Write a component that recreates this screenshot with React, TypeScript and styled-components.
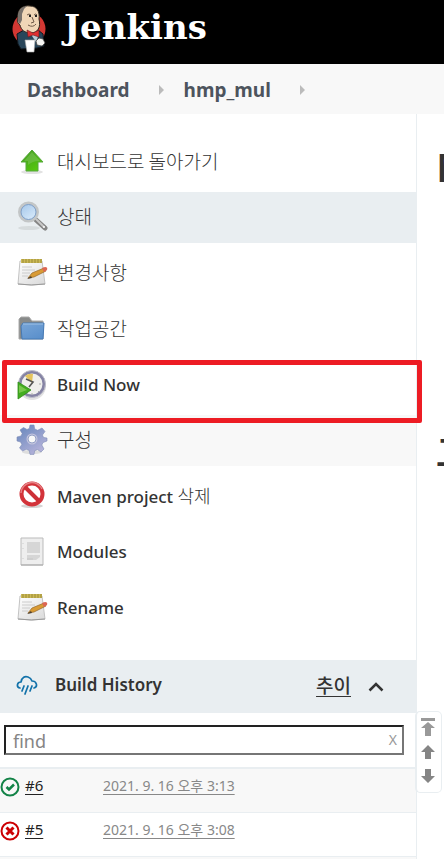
import React from 'react';
import styled, { createGlobalStyle } from 'styled-components';

const latin = `'Noto Sans', 'Noto Sans CJK KR', sans-serif`;
const korean = `'Noto Sans CJK KR', 'Noto Sans', sans-serif`;

const GlobalStyle = createGlobalStyle`
  *, *::before, *::after { box-sizing: border-box; }
  html, body, #root { height: 100%; }
  body {
    margin: 0;
    overflow: hidden;
    background: #fff;
    color: #333;
    font-family: ${latin};
  }
`;

const Page = styled.div`
  display: flex;
  flex-direction: column;
  height: 100%;
  overflow: hidden;
`;

const Header = styled.header`
  flex: none;
  height: 64px;
  padding: 4px 12px;
  background: #000;
`;

const Brand = styled.a`
  display: flex;
  align-items: flex-start;
  gap: 18px;
  color: #fff;
  text-decoration: none;
`;

const BrandName = styled.span`
  font: bold 34px/46px 'DejaVu Serif', serif;
`;

const Breadcrumbs = styled.nav`
  flex: none;
  display: flex;
  align-items: center;
  height: 50px;
  padding: 2px 27px 0;
  gap: 20px;
  background: #f8f8f8;
`;

const Crumb = styled.a`
  color: #4d545d;
  font-size: 19px;
  line-height: 26px;
  font-weight: 700;
  text-decoration: none;
`;

const CrumbGroup = styled.div`
  display: flex;
  align-items: center;
  gap: 29px;
`;

const Body = styled.div`
  flex: 1;
  display: flex;
  min-height: 0;
`;

const SidePanel = styled.aside`
  position: relative;
  flex: 1;
  min-width: 0;
  border-right: 1px solid #e9eef1;
`;

const Main = styled.main`
  flex: none;
  width: 27px;
  padding: 26px 0 0 19px;
  overflow: hidden;
  white-space: nowrap;
`;

const Title = styled.h1`
  margin: 0;
  font-size: 40px;
  line-height: 54px;
  font-weight: 600;
`;

const Subtitle = styled.h2`
  margin: 230px 0 0;
  font-family: ${korean};
  font-size: 36px;
  line-height: 54px;
  font-weight: 700;
`;

const TaskList = styled.ul`
  display: flex;
  flex-direction: column;
  justify-content: space-between;
  min-height: 497px;
  margin: 22px 0 27px;
  padding: 0;
  list-style: none;
`;

const Task = styled.li<{ $tone?: string }>`
  height: 51px;
  background: ${(p) => p.$tone ?? 'transparent'};
`;

const TaskLink = styled.a`
  display: flex;
  align-items: center;
  gap: 9px;
  height: 100%;
  padding-left: 16px;
  color: #333;
  font-size: 17px;
  font-weight: 500;
  line-height: 24px;
  text-decoration: none;
`;

const Hangul = styled.span<{ $size?: number }>`
  padding-bottom: 2px;
  font-family: ${korean};
  font-size: ${(p) => p.$size ?? 19}px;
  font-weight: 300;
`;

const Highlight = styled.div`
  position: absolute;
  top: 246px;
  left: 2px;
  right: -6px;
  height: 63px;
  border: 5px solid #ed1c24;
  border-radius: 2px;
  pointer-events: none;
`;

const HistoryHeader = styled.div`
  display: flex;
  align-items: center;
  height: 53px;
  padding: 0 31px 4px 16px;
  background: #e9eef1;
`;

const HistoryTitle = styled.h2`
  flex: 1;
  margin: 0 0 0 17px;
  font-size: 17px;
  line-height: 24px;
  font-weight: 600;
`;

const TrendLink = styled.a`
  color: #333;
  font-family: ${korean};
  font-size: 19px;
  line-height: 26px;
  font-weight: 500;
  text-decoration: underline;
  text-underline-offset: 3px;
`;

const Collapse = styled.button`
  display: flex;
  margin: 4px 0 0 16px;
  padding: 0;
  border: 0;
  background: none;
`;

const Search = styled.div`
  position: relative;
  padding: 12px 12px 12px 4px;
  border-bottom: 2px solid #e9eef1;
`;

const SearchInput = styled.input`
  display: block;
  width: 100%;
  height: 30px;
  padding: 2px 28px 0 7px;
  border: 2px solid #767676;
  border-top-color: #222;
  border-left-color: #222;
  border-radius: 0;
  background: #fff;
  font: 400 18px/24px ${latin};
  outline: none;
  &::placeholder { color: #858585; opacity: 1; }
`;

const Clear = styled.button`
  position: absolute;
  top: 17px;
  right: 19px;
  padding: 0;
  border: 0;
  background: none;
  color: #999;
  font: 400 14px/20px ${latin};
`;

const BuildTable = styled.table`
  width: 100%;
  border-collapse: separate;
  border-spacing: 0;
`;

const BuildRow = styled.tr<{ $shaded?: boolean }>`
  height: 44px;
  background: ${(p) => (p.$shaded ? '#f8f8f8' : '#fff')};
`;

const Cell = styled.td`
  padding: 0;
  border-bottom: 1px solid #e9eef1;
  vertical-align: top;
`;

const BuildId = styled.div`
  display: flex;
  gap: 5px;
  width: 103px;
  padding-top: 6px;
`;

const StatusIcon = styled.svg`
  margin-top: 2px;
`;

const BuildLink = styled.a<{ $muted?: boolean }>`
  color: ${(p) => (p.$muted ? '#888' : '#222')};
  font-size: ${(p) => (p.$muted ? 14 : 15)}px;
  line-height: 20px;
  text-decoration: underline;
  text-underline-offset: 3px;
`;

const BuildTime = styled.div`
  padding-top: 6px;
  line-height: 20px;
`;

const ScrollNav = styled.nav`
  position: absolute;
  top: 597px;
  right: -26px;
  width: 27px;
  display: flex;
  flex-direction: column;
  align-items: center;
  gap: 8px;
  height: 82px;
  padding: 6px 2px 6px 0;
  border: 1px solid #e9eef1;
  border-left-width: 2px;
  border-radius: 5px;
  background: #fff;
`;

const ScrollButton = styled.button`
  display: flex;
  padding: 0;
  border: 0;
  background: none;
`;

const Butler = () => (
  <svg width="34" height="50" viewBox="0 0 34 50" aria-hidden="true">
    <circle cx="17" cy="25" r="16.5" fill="#d33833" />
    <path d="M5 30l7-4h14l5 4 1 12-7 2-16 1-3-5z" fill="#29465a" stroke="#101820" />
    <path d="M6 14C5 5 11 1 18 2c7 0 10 6 9 13 2 8-1 14-8 14-6 0-10-3-11-8-3-2-3-6-2-7z" fill="#f0d6b7" stroke="#302820" />
    <path d="M6 15C5 7 9 3 15 2l-3 3-2 5v6l-2 4c-2-1-2-3-2-5z" fill="#77716c" />
    <path d="M15 11q2-2 4 0M22 11q2-2 3 0M20 13l2 5-3 1M16 21q5 3 8-1" fill="none" stroke="#6d5848" />
    <path d="M17 12h2M23 12h2" stroke="#222" strokeWidth="2" />
    <path d="M18 29l9 1-3 8z" fill="#b9cbd5" />
    <path d="M15 26l6 3 6-3v7l-6-2-5 2z" fill="#df3032" stroke="#651c20" strokeWidth="0.6" />
    <path d="M27 34l4 1 2 4-3 3-5-1-1-4z" fill="#f5f5f2" stroke="#45423f" strokeWidth="0.7" />
    <path d="M13 36h10l-1 12h-7z" fill="#fff" stroke="#a9a9a9" strokeWidth="0.6" />
  </svg>
);

const CrumbArrow = () => (
  <svg width="5" height="10" viewBox="0 0 5 10" aria-hidden="true"><path d="M0 0l5 5-5 5z" fill="#bbb" /></svg>
);

const TaskIcon = ({ children }: { children: React.ReactNode }) => (
  <svg width="32" height="32" viewBox="0 0 32 32" aria-hidden="true">{children}</svg>
);

const Gradient = ({ id, from, to }: { id: string; from: string; to: string }) => (
  <linearGradient id={id} x1="0" y1="0" x2="0.7" y2="1">
    <stop stopColor={from} /><stop offset="1" stopColor={to} />
  </linearGradient>
);

const UpIcon = () => (
  <TaskIcon>
    <Gradient id="green" from="#419722" to="#57c90d" />
    <ellipse cx="16" cy="26" rx="11" ry="2" fill="#e2e2e2" />
    <path d="M16 4L27 16h-5v9H10v-9H5z" fill="url(#green)" stroke="#56a83c" />
    <path d="M16 6L8 15h4v4q5-4 10-4h2z" fill="#8fca72" opacity=".4" />
  </TaskIcon>
);

const SearchIcon = () => (
  <TaskIcon>
    <Gradient id="lens" from="#9fc3e8" to="#d9ebfb" />
    <ellipse cx="13" cy="27" rx="11" ry="2" fill="#d6dbdd" />
    <path d="M19 18l10 9" stroke="#858585" strokeWidth="5" strokeLinecap="round" />
    <path d="M20 18l8 8" stroke="#c9c9c9" strokeWidth="2" />
    <circle cx="12.5" cy="11" r="9" fill="url(#lens)" stroke="#c3c6c7" strokeWidth="3" />
    <circle cx="12.5" cy="11" r="7.5" fill="none" stroke="#7e9fc8" />
    <circle cx="28" cy="26" r="1" fill="#fff" />
  </TaskIcon>
);

const NotepadIcon = () => (
  <TaskIcon>
    <Gradient id="paper" from="#ffffff" to="#dedede" />
    <path d="M4 4h22l3 23q-13 2-27 0z" fill="url(#paper)" stroke="#c3c3c3" />
    <path d="M2 27q13 2 27 0" fill="none" stroke="#999" />
    <path d="M5 2h21v4H5z" fill="#cbb957" />
    <path d="M7 2v4M10 2v4M13 2v4M16 2v4M19 2v4M22 2v4M25 2v4" stroke="#9c8b35" />
    <path d="M6 10h10M6 13h13M6 16h8M6 19h6" stroke="#ccc" />
    <path d="M12 21l4-5 12-5 2 3-12 6z" fill="#d99b35" stroke="#94672a" strokeWidth=".7" />
    <path d="M26 11l3-1q3 0 2 3l-3 2z" fill="#dc6654" />
    <path d="M11 22l4-3 1 2z" fill="#4d4030" />
  </TaskIcon>
);

const FolderIcon = () => (
  <TaskIcon>
    <Gradient id="folder" from="#78a5d7" to="#5b90cc" />
    <path d="M3 26V6l2-2h8l3 4h11v18z" fill="#888a89" stroke="#aaa" />
    <path d="M5 13l2-3h21l-1 16H6z" fill="url(#folder)" stroke="#477ab5" />
    <path d="M7 11h20" stroke="#9fc2e6" />
  </TaskIcon>
);

const ClockIcon = () => (
  <TaskIcon>
    <circle cx="16" cy="17" r="14" fill="#e2e2e2" />
    <circle cx="16" cy="15" r="12" fill="#f0f0ed" stroke="#8583a4" strokeWidth="3" />
    <circle cx="16" cy="15" r="13.5" fill="none" stroke="#bdbdca" />
    <path d="M16 14L9 7q4-3 8-2z" fill="#e4c35c" />
    <path d="M10 10l7 3-4 5" fill="none" stroke="#555" strokeWidth="1.6" />
    <path d="M23 15h2M16 24v2M22 22l1 1" stroke="#aaa" />
    <path d="M2 13l13 8-13 9z" fill="#43ad20" stroke="#308b19" strokeWidth=".8" />
    <path d="M3 16l8 5-8 3z" fill="#79c84d" />
  </TaskIcon>
);

const GearIcon = () => (
  <TaskIcon>
    <Gradient id="gear" from="#6385bb" to="#b7b3da" />
    <ellipse cx="16" cy="28" rx="10" ry="2" fill="#ddd" />
    <path d="M14 1h4l.7 4 3 1.300L26 4l3 3.500-2.600 3.500 1.200 2.500 3.400.5v3l-4 1.500-1.200 2.500 2.200 4-3 3-3.500-2.500-2.800 1.200-.7 3.700h-4l-.8-4-2.900-1.100L6.600 27 3.500 24l2.300-3.500L4.600 18 1 17v-4l4-1 1.200-2.500L4 6l3.500-2.500L11 5.500l2.300-1z" fill="url(#gear)" stroke="#7d8bb5" strokeWidth=".6" />
    <circle cx="16" cy="15" r="5.500" fill="#c3c4de" />
    <circle cx="16" cy="15" r="4" fill="#f8f8f8" stroke="#93a0c6" />
  </TaskIcon>
);

const StopIcon = () => (
  <TaskIcon>
    <ellipse cx="16" cy="26" rx="11" ry="2" fill="#d4d4d4" />
    <circle cx="16" cy="14" r="10.500" fill="#fff" stroke="#d3333a" strokeWidth="4" />
    <path d="M9 7l14 14" stroke="#cd3037" strokeWidth="4" />
    <path d="M5 13a11 11 0 0 1 21-4" fill="none" stroke="#e68286" strokeWidth="1.500" />
  </TaskIcon>
);

const ModulesIcon = () => (
  <TaskIcon>
    <path d="M5 2h22v27H5z" fill="#eee" stroke="#bbb" />
    <path d="M5 29h22" stroke="#aaa" />
    <path d="M11 6h13v11H11zM11 19h13v2l-4 3h-9z" fill="#d6d6d6" />
    <path d="M7 7v1M7 12v1M7 22v1" stroke="#ddd" strokeWidth="2" />
    <path d="M11 23h6" stroke="#c6c6c6" />
  </TaskIcon>
);

const RainIcon = () => (
  <svg width="22" height="20" viewBox="0 0 22 20" fill="none" stroke="#1272aa" strokeWidth="1.700" strokeLinecap="round" strokeLinejoin="round" aria-hidden="true">
    <path d="M4 13C0 12 1 7 5 7C6 2 9 1 12 2Q15 3 16 6C21 6 22 12 18 13" />
    <path d="M8 11l-2 5M12 11l-3 8M16 11l-2 5" />
  </svg>
);

const tasks = [
  { label: <Hangul>대시보드로 돌아가기</Hangul>, icon: <UpIcon /> },
  { label: <Hangul>상태</Hangul>, icon: <SearchIcon />, tone: '#e9eef1' },
  { label: <Hangul>변경사항</Hangul>, icon: <NotepadIcon /> },
  { label: <Hangul>작업공간</Hangul>, icon: <FolderIcon /> },
  { label: 'Build Now', icon: <ClockIcon /> },
  { label: <Hangul>구성</Hangul>, icon: <GearIcon />, tone: '#f8f8f8' },
  { label: <span>Maven project <Hangul $size={18}>삭제</Hangul></span>, icon: <StopIcon /> },
  { label: 'Modules', icon: <ModulesIcon /> },
  { label: 'Rename', icon: <NotepadIcon /> },
];

const builds = [
  { id: '#6', time: '2021. 9. 16 오후 3:13', ok: true },
  { id: '#5', time: '2021. 9. 16 오후 3:08', ok: false },
];

const Status = ({ ok }: { ok: boolean }) => (
  <StatusIcon width="20" height="20" viewBox="0 0 20 20" fill="none" stroke={ok ? '#138347' : '#cc0003'} role="img" aria-label={ok ? 'Success' : 'Failed'}>
    <circle cx="10" cy="10" r="8.500" strokeWidth="2" />
    <path d={ok ? 'M6.500 10l2.500 2.500L14 7.500' : 'M6.500 6.500l7 7M13.500 6.500l-7 7'} strokeWidth={ok ? 2.5 : 3} />
  </StatusIcon>
);

export default function App() {
  return (
    <Page>
      <GlobalStyle />
      <Header>
        <Brand href="#"><Butler /><BrandName>Jenkins</BrandName></Brand>
      </Header>
      <Breadcrumbs aria-label="Breadcrumb">
        {['Dashboard', 'hmp_mul'].map((name) => (
          <CrumbGroup key={name}><Crumb href="#">{name}</Crumb><CrumbArrow /></CrumbGroup>
        ))}
      </Breadcrumbs>
      <Body>
        <SidePanel>
          <TaskList>
            {tasks.map((task, i) => (
              <Task key={i} $tone={task.tone}>
                <TaskLink href="#">{task.icon}{task.label}</TaskLink>
              </Task>
            ))}
          </TaskList>
          <HistoryHeader>
            <RainIcon />
            <HistoryTitle>Build History</HistoryTitle>
            <TrendLink href="#">추이</TrendLink>
            <Collapse aria-label="Collapse">
              <svg width="18" height="12" viewBox="0 0 18 12"><path d="M2.500 9.500L9 3l6.500 6.500" fill="none" stroke="#333" strokeWidth="2.500" /></svg>
            </Collapse>
          </HistoryHeader>
          <Search>
            <SearchInput placeholder="find" aria-label="Find builds" />
            <Clear aria-label="Clear">X</Clear>
          </Search>
          <BuildTable>
            <tbody>
              {builds.map((build) => (
                <BuildRow key={build.id} $shaded={build.ok}>
                  <Cell><BuildId><Status ok={build.ok} /><BuildLink href="#">{build.id}</BuildLink></BuildId></Cell>
                  <Cell width="100%"><BuildTime><BuildLink href="#" $muted>{build.time}</BuildLink></BuildTime></Cell>
                </BuildRow>
              ))}
              <BuildRow $shaded><Cell colSpan={2} /></BuildRow>
            </tbody>
          </BuildTable>
          <Highlight />
          <ScrollNav aria-label="Scroll builds">
            <ScrollButton aria-label="Newest">
              <svg width="14" height="18" viewBox="0 0 14 18" fill="#999"><path d="M0 0h14v3H0zM7 4l7 6h-4v8H4v-8H0z" /></svg>
            </ScrollButton>
            <ScrollButton aria-label="Newer">
              <svg width="14" height="16" viewBox="0 0 14 16" fill="#858585"><path d="M7 1l7 7h-4v7H4V8H0z" /></svg>
            </ScrollButton>
            <ScrollButton aria-label="Older">
              <svg width="14" height="16" viewBox="0 0 14 16" fill="#858585"><path d="M7 15l7-7h-4V1H4v7H0z" /></svg>
            </ScrollButton>
          </ScrollNav>
        </SidePanel>
        <Main>
          <Title>Maven project hmp_mul</Title>
          <Subtitle>고정링크</Subtitle>
        </Main>
      </Body>
    </Page>
  );
}
